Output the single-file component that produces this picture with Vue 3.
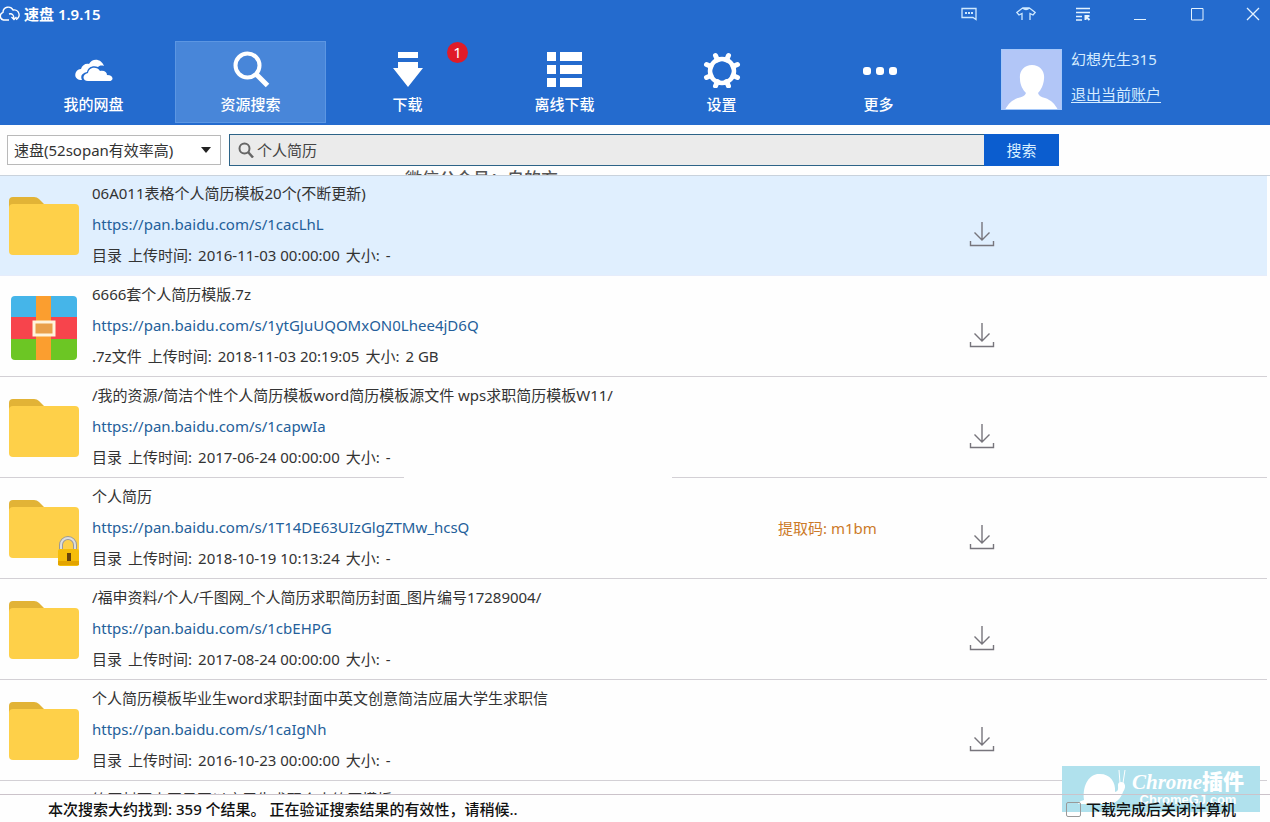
<script setup>
import { ref } from 'vue'

const tabs = [
  { id: 'disk', label: '我的网盘' },
  { id: 'search', label: '资源搜索' },
  { id: 'download', label: '下载', badge: 1 },
  { id: 'offline', label: '离线下载' },
  { id: 'settings', label: '设置' },
  { id: 'more', label: '更多' }
]
const activeTab = ref('search')
const source = ref('sopan')
const keyword = ref('个人简历')
const shutdown = ref(false)

const results = [
  { kind: 'folder', title: '06A011表格个人简历模板20个(不断更新)', url: 'https://pan.baidu.com/s/1cacLhL', type: '目录', time: '2016-11-03 00:00:00', size: '-', selected: true },
  { kind: 'archive', title: '6666套个人简历模版.7z', url: 'https://pan.baidu.com/s/1ytGJuUQOMxON0Lhee4jD6Q', type: '.7z文件', time: '2018-11-03 20:19:05', size: '2 GB' },
  { kind: 'folder', title: '/我的资源/简洁个性个人简历模板word简历模板源文件 wps求职简历模板W11/', url: 'https://pan.baidu.com/s/1capwIa', type: '目录', time: '2017-06-24 00:00:00', size: '-', patch: true },
  { kind: 'folder', locked: true, title: '个人简历', url: 'https://pan.baidu.com/s/1T14DE63UIzGlgZTMw_hcsQ', type: '目录', time: '2018-10-19 10:13:24', size: '-', code: '提取码: m1bm' },
  { kind: 'folder', title: '/福申资料/个人/千图网_个人简历求职简历封面_图片编号17289004/', url: 'https://pan.baidu.com/s/1cbEHPG', type: '目录', time: '2017-08-24 00:00:00', size: '-' },
  { kind: 'folder', title: '个人简历模板毕业生word求职封面中英文创意简洁应届大学生求职信', url: 'https://pan.baidu.com/s/1caIgNh', type: '目录', time: '2016-10-23 00:00:00', size: '-' },
  { kind: 'folder', title: '简历封面大国风图以应届生求职个人简历模板 .d' }
]
</script>

<template>
  <div class="app">
    <header class="header">
      <div class="titlebar">
        <svg class="logo" width="20" height="16" viewBox="0 0 20 16" fill="none" stroke="#fff" stroke-width="1.4">
          <path d="M9 14H3.5A4 4 0 0 1 3 6.300 5.300 5.300 0 0 1 13 4a5 5 0 0 1 3 9.500" />
          <path d="M9 8c3-1 5 1 5 5M11.500 11l2.500 2.500 2.500-2.500" />
        </svg>
        <h1 class="app-name">速盘 1.9.15</h1>
        <div class="window-tools">
          <button type="button" aria-label="消息"><svg width="16" height="14" viewBox="0 0 16 14" fill="none" stroke="#cfe9ff" stroke-width="1.300"><path d="M1 1.500h14v11l-3-2H1z" /><path d="M4 6h2M7 6h2M10 6h2" stroke-width="2" /></svg></button>
          <button type="button" aria-label="皮肤"><svg width="20" height="14" viewBox="0 0 20 14" fill="none" stroke="#cfe9ff" stroke-width="1.300"><path d="M6 13V6.500L3 8 .8 5.500 6.500 1Q10 4 13.500 1l5.700 4.500L17 8l-3-1.500V13M6.500 1h7" /></svg></button>
          <button type="button" aria-label="菜单"><svg width="16" height="14" viewBox="0 0 16 14" fill="none" stroke="#e4f3ff" stroke-width="1.400"><path d="M1 1.500h14M1 5.500h14M1 9.500h6M1 13h6" /><path d="M10.500 13V9h4M10.500 9l4 4" stroke-width="2" /></svg></button>
          <button type="button" aria-label="最小化"><svg width="14" height="14" viewBox="0 0 14 14" stroke="#e4f3ff"><path d="M1 12.500h12" /></svg></button>
          <button type="button" aria-label="最大化"><svg width="14" height="14" viewBox="0 0 14 14" fill="none" stroke="#e4f3ff"><path d="M1.500 1.500h11.500v11.500H1.500z" /></svg></button>
          <button type="button" aria-label="关闭"><svg width="14" height="14" viewBox="0 0 14 14" stroke="#e4f3ff" stroke-width="1.300"><path d="M1 1l12 12M13 1L1 13" /></svg></button>
        </div>
      </div>

      <div class="toolbar">
        <nav class="tabs">
          <button v-for="tab in tabs" :key="tab.id" type="button" class="tab" :class="{ active: activeTab === tab.id }" @click="activeTab = tab.id">
            <svg v-if="tab.id === 'disk'" width="38" height="38" viewBox="0 0 38 38" fill="#fff">
              <path d="M7 30C1 30-1 26 1 22c1-2 3-3 5-3 1-4 5-6 8-5 3-6 12-6 15 2-3-1-5 0-6 1-5-2-10 0-11 5-5 1-7 4-5 8z" />
              <path d="M13 31c-6 0-6-7 0-8 1-6 9-7 12-2 4-1 7 1 7 4 7 0 7 6 2 6z" />
            </svg>
            <svg v-else-if="tab.id === 'search'" width="38" height="38" viewBox="0 0 38 38" fill="none" stroke="#fff">
              <circle cx="15.500" cy="15.500" r="12" stroke-width="4" />
              <path d="M24 24l11.500 11.500" stroke-width="5" />
            </svg>
            <svg v-else-if="tab.id === 'download'" width="38" height="38" viewBox="0 0 38 38" fill="#fff">
              <path d="M9 2h20v6H9zM9 12h20v6h5L19 37 4 18h5z" />
            </svg>
            <svg v-else-if="tab.id === 'offline'" width="38" height="38" viewBox="0 0 38 38" fill="#fff">
              <path d="M1 2h9v9H1zM14 2h22v9H14zM1 15h9v9H1zM14 15h22v9H14zM1 28h9v9H1zM14 28h22v9H14z" />
            </svg>
            <svg v-else-if="tab.id === 'settings'" width="38" height="38" viewBox="0 0 38 38" fill="none" stroke="#fff">
              <circle cx="19" cy="21" r="12" stroke-width="4.500" />
              <path stroke-width="5" stroke-linecap="round" d="M12.500 5.500l2 4.500M25.500 5.500l-2 4.500M34.500 14.500l-4.500 2M34.500 27.500l-4.500-2M25.500 36l-2-4.500M12.500 36l2-4.500M3.500 27.500l4.500-2M3.500 14.500l4.500 2" />
            </svg>
            <svg v-else width="38" height="38" viewBox="0 0 38 38" fill="#fff">
              <rect x="3" y="17" width="8" height="8" rx="3" /><rect x="16" y="17" width="8" height="8" rx="3" /><rect x="29" y="17" width="8" height="8" rx="3" />
            </svg>
            <span>{{ tab.label }}</span>
            <span v-if="tab.badge" class="badge">{{ tab.badge }}</span>
          </button>
        </nav>
        <div class="account">
          <svg class="avatar" width="61" height="61" viewBox="0 0 61 61">
            <path fill="#b2c6f7" d="M0 0h61v61H0z" />
            <path fill="#fff" d="M31 16c8 0 13 6 12 14-.5 6-3 11-6 14 1 3 3 4 7 5 6 2 10 6 13 12H4c3-6 7-10 13-12 4-1 7-2 8-5-3-3-6-8-6-14-1-8 4-14 12-14z" />
            <path fill="none" stroke="#a5c8fa" d="M.5.500h60v60H.5z" />
          </svg>
          <div class="account-text">
            <span>幻想先生315</span>
            <a href="#">退出当前账户</a>
          </div>
        </div>
      </div>
    </header>

    <form class="searchbar" @submit.prevent>
      <div class="source">
        <select v-model="source" aria-label="搜索来源">
          <option value="sopan">速盘(52sopan有效率高)</option>
        </select>
        <svg class="caret" width="10" height="6" viewBox="0 0 10 6"><path fill="#222" d="M0 0h10L5 6z" /></svg>
      </div>
      <div class="field">
        <svg width="16" height="16" viewBox="0 0 16 16" fill="none" stroke="#666"><circle cx="6.500" cy="6.500" r="5" stroke-width="2" /><path d="M10 10l5 5.500" stroke-width="2.500" /></svg>
        <input v-model="keyword" type="text" aria-label="关键词">
      </div>
      <button class="go" type="submit">搜索</button>
      <div class="notice">微信公众号：自的方</div>
    </form>

    <main class="results">
      <article v-for="(item, i) in results" :key="i" class="row" :class="{ selected: item.selected }">
        <div class="thumb">
          <svg v-if="item.kind === 'folder'" width="72" height="72" viewBox="0 0 72 72">
            <path fill="#e2b336" d="M1 18V9q0-4 4-4h21q3 0 5 2l5 5v10H1z" />
            <rect fill="#fed049" x="1" y="12" width="70" height="51" rx="4" />
            <g v-if="item.locked">
              <path d="M53 55v-5a7 7 0 0 1 14 0v5" fill="none" stroke="#999" stroke-width="4" />
              <path d="M53 55v-5a7 7 0 0 1 14 0v5" fill="none" stroke="#ddd" stroke-width="2" />
              <rect x="50" y="54" width="21" height="17" rx="2" fill="#f5bd0a" />
              <path d="M50 66h21v4H50z" fill="#e3a400" />
              <path d="M59 58h4v8h-4z" fill="#67430c" />
            </g>
          </svg>
          <svg v-else width="72" height="72" viewBox="0 0 72 72">
            <path fill="#45b5e9" d="M7 3h58q4 0 4 4v18H3V7q0-4 4-4z" />
            <path fill="#f7444c" d="M3 24h66v22H3z" />
            <path fill="#6cc624" d="M3 46h66v17q0 4-4 4H7q-4 0-4-4z" />
            <path fill="#fb9e2f" d="M28 3h15v64H28z" />
            <rect x="26" y="29" width="20" height="13" fill="#e9a04a" stroke="#fff4dc" stroke-width="3" />
          </svg>
        </div>
        <div class="info">
          <p>{{ item.title }}</p>
          <p v-if="item.url"><a href="#">{{ item.url }}</a></p>
          <p v-if="item.time" class="meta">
            <span>{{ item.type }}</span>
            <span>上传时间:</span>
            <span>{{ item.time }}</span>
            <span>大小:</span>
            <span>{{ item.size }}</span>
          </p>
        </div>
        <div class="code">{{ item.code }}</div>
        <button class="get" type="button" aria-label="下载">
          <svg width="26" height="26" viewBox="0 0 26 26" fill="none" stroke="#77757c" stroke-width="1.400"><path d="M13 1v18M5.500 11.500L13 19l7.500-7.500M1.500 20v4.500h23V20" /></svg>
        </button>
        <div v-if="item.patch" class="patch"></div>
      </article>
    </main>

    <footer class="status">
      <span>本次搜索大约找到: 359 个结果。 正在验证搜索结果的有效性，请稍候..</span>
      <label class="shutdown"><input v-model="shutdown" type="checkbox"><span>下载完成后关闭计算机</span></label>
    </footer>

    <div class="brand">
      <svg width="50" height="36" viewBox="0 0 50 36" fill="#fff">
        <path d="M0 35q1-3 6-4C4 14 13 4 22 5c10 0 16 8 15 18 4-1 3-4 3-7 0-3 3-4 6-2 2 3 1 6-1 9-2 6-7 12-14 12z" />
        <path d="M42 14L41 1M45 14l2-13" fill="none" stroke="#fff" />
      </svg>
      <div class="brand-text">
        <strong>Chrome<span>插件</span></strong>
        <small>ChromeGJ.com</small>
      </div>
    </div>
  </div>
</template>

<style>
body {
  margin: 0;
  background: #fff;
}
</style>

<style scoped>
.app {
  position: relative;
  display: flex;
  flex-direction: column;
  height: 100vh;
  overflow: hidden;
  background: #fefefe;
  color: #333;
  font: 15px/20px "Noto Sans", "Noto Sans CJK SC", sans-serif;
}
* { box-sizing: border-box; }
button, input, select { font: inherit; }
button {
  padding: 0;
  border: 0;
  background: none;
  color: inherit;
  cursor: pointer;
}
svg { display: block; }

.header {
  flex: none;
  height: 125px;
  background: #246bce;
  color: #fff;
}
.titlebar {
  display: flex;
  align-items: center;
  height: 27px;
  padding-right: 8px;
}
.app-name {
  margin: 0 0 0 4px;
  font-size: 15px;
  font-weight: 600;
}
.window-tools {
  display: flex;
  margin-left: auto;
}
.window-tools button {
  display: flex;
  justify-content: center;
  width: 57px;
}
.window-tools button:last-child {
  width: 18px;
  margin-left: 19px;
}
.toolbar {
  display: flex;
  padding: 14px 0 0 18px;
}
.tabs {
  display: flex;
  gap: 6px;
}
.tab {
  position: relative;
  display: flex;
  flex-direction: column;
  align-items: center;
  gap: 6px;
  width: 151px;
  height: 82px;
  padding-top: 8px;
  border: 1px solid transparent;
  font-weight: 500;
}
.tab.active {
  border-color: #5c96e2;
  background: #4886d9;
}
.badge {
  position: absolute;
  top: 0;
  right: 14px;
  width: 21px;
  height: 21px;
  border-radius: 50%;
  background: #e01b28;
  font-size: 15px;
  font-weight: 400;
  line-height: 21px;
}
.account {
  display: flex;
  gap: 9px;
  margin: 8px 0 0 47px;
  color: #d6ecff;
}
.account-text {
  display: flex;
  flex-direction: column;
  gap: 15px;
  white-space: nowrap;
}
.account a {
  color: inherit;
  text-underline-offset: 2px;
}

.searchbar {
  position: relative;
  display: flex;
  flex: none;
  align-items: center;
  height: 51px;
  padding: 0 211px 0 7px;
  border-bottom: 1px solid #c9d2dc;
}
.source {
  position: relative;
  width: 214px;
  margin-right: 8px;
}
.source select {
  width: 100%;
  height: 30px;
  padding: 0 6px;
  border: 1px solid #b9b9b9;
  border-radius: 0;
  background: #fff;
  color: #333;
  appearance: none;
}
.caret {
  position: absolute;
  top: 12px;
  right: 10px;
  pointer-events: none;
}
.field {
  display: flex;
  flex: 1;
  align-items: center;
  gap: 3px;
  height: 32px;
  padding-left: 8px;
  border: 1px solid #2c6387;
  border-right: 0;
  background: #ebebeb;
}
.field input {
  flex: 1;
  min-width: 0;
  padding: 0;
  border: 0;
  outline: 0;
  background: none;
  color: #444;
}
.go {
  width: 75px;
  height: 32px;
  background: #0b5dcf;
  color: #d9f0ff;
}
.notice {
  position: absolute;
  left: 405px;
  bottom: 0;
  height: 6px;
  overflow: hidden;
  color: #555;
  font: 500 17px/21px "Liberation Serif", "Noto Sans CJK SC", serif;
}

.results {
  flex: 1;
  min-height: 0;
  margin: -1px 3px 0 0;
  overflow: hidden;
}
.row {
  position: relative;
  display: grid;
  grid-template-columns: 92px 1fr 191px 298px;
  align-items: center;
  height: 101px;
  border-bottom: 1px solid #d3d0d5;
}
.row.selected {
  border-color: #e5ecfb;
  background: #e0effe;
  box-shadow: inset 0 1px #c9d2dc;
}
.thumb { padding: 5px 0 0 8px; }
.info {
  align-self: start;
  padding-top: 3px;
  white-space: nowrap;
}
.info p {
  height: 31px;
  margin: 0;
  line-height: 31px;
}
.info .meta {
  display: flex;
  gap: 6px;
}
.info a {
  color: #24609a;
  text-decoration: none;
}
.code { color: #cc7a28; }
.get {
  justify-self: start;
  margin-top: 18px;
}
.patch {
  position: absolute;
  z-index: 1;
  left: 404px;
  bottom: -32px;
  width: 268px;
  height: 62px;
  border-radius: 20px;
  background: #fefefe;
}

.status {
  position: relative;
  z-index: 3;
  display: flex;
  flex: none;
  align-items: center;
  justify-content: space-between;
  height: 28px;
  padding: 1px 34px 0 48px;
  border-top: 1px solid #cbc3ca;
  color: #111;
  font-weight: 500;
}
.shutdown {
  display: flex;
  align-items: center;
  gap: 5px;
}
.shutdown input {
  width: 15px;
  height: 15px;
  margin: 0;
  border: 1px solid #999;
  border-radius: 2px;
  background: transparent;
  appearance: none;
}
.shutdown input:checked { background: #246bce; }

.brand {
  position: absolute;
  z-index: 2;
  right: 10px;
  bottom: 10px;
  display: flex;
  gap: 4px;
  width: 198px;
  height: 46px;
  padding: 3px 0 0 16px;
  background: #b0e1ed;
  color: #fff;
  pointer-events: none;
}
.brand-text {
  display: flex;
  flex-direction: column;
  align-items: center;
}
.brand strong {
  font: italic 700 21px/22px "Liberation Serif", serif;
}
.brand strong span {
  font: 900 21px/22px "Noto Sans CJK SC", sans-serif;
}
.brand small {
  font: 700 13px/13px "Liberation Sans", sans-serif;
}
</style>
